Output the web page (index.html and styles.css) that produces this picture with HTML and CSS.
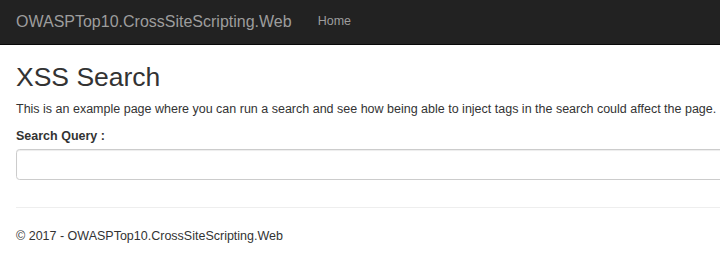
FILE: index.html
```html
<!DOCTYPE html>
<html lang="en">
  <head>
    <meta charset="UTF-8" />
    <title>XSS Search - OWASPTop10.CrossSiteScripting.Web</title>
    <link rel="stylesheet" href="styles.css">
  </head>
  <body>
    <div class="navbar">
      <a class="navbar-brand" href="#">OWASPTop10.CrossSiteScripting.Web</a>
      <ul class="nav">
        <li><a href="#">Home</a></li>
      </ul>
    </div>

    <div class="container body-content">
      <h2>XSS Search</h2>
      <p>This is an example page where you can run a search and see how being able to inject tags in the search could affect the page.</p>

      <form class="search-form">
        <label for="query">Search Query :</label>
        <input type="text" id="query" class="form-control" />
      </form>

      <hr />
      <footer>
        <p>&copy; 2017 - OWASPTop10.CrossSiteScripting.Web</p>
      </footer>
    </div>
  </body>
</html>
```

FILE: styles.css
```css
html, body {
  overflow: hidden;
}

body {
  margin: 0;
  font-family: "Liberation Sans", Arial, sans-serif;
  font-size: 12.5px;
  line-height: 1.43;
  color: #333;
  background: #fff;
}

a {
  text-decoration: none;
}

.navbar {
  display: flex;
  align-items: center;
  height: 44px;
  padding: 0 16px;
  background-color: #222;
  border-bottom: 1px solid #080808;
}

.navbar-brand {
  font-size: 16px;
  color: #9d9d9d;
}

.nav {
  display: flex;
  list-style: none;
  margin: 0 0 0 26px;
  padding: 0;
}

.nav a {
  color: #9d9d9d;
  font-size: 12.5px;
}

.container {
  width: 960px;
  padding: 0 16px;
}

h2 {
  margin: 18px 0 9px;
  font-size: 26.5px;
  font-weight: 500;
  line-height: 1.1;
}

p {
  margin: 0 0 9px;
}

.search-form label {
  display: block;
  font-weight: bold;
  margin-bottom: 3px;
}

.form-control {
  display: block;
  box-sizing: border-box;
  width: 100%;
  height: 31px;
  padding: 5px 11px;
  font-size: 12.5px;
  border: 1px solid #ccc;
  border-radius: 3.6px;
  box-shadow: inset 0 1px 1px rgba(0, 0, 0, 0.075);
}

hr {
  margin: 27px 0 20px;
  border: 0;
  border-top: 1px solid #eee;
}
```
